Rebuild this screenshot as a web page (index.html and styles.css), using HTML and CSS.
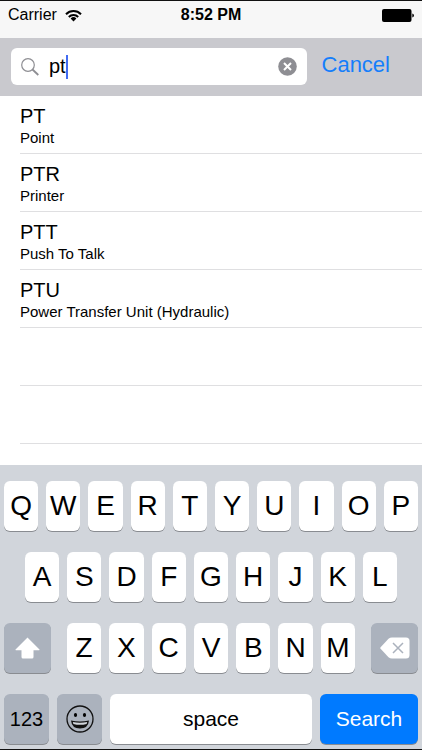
FILE: index.html
```html
<!DOCTYPE html>
<html lang="en">
<head>
<meta charset="utf-8">
<meta name="viewport" content="width=device-width, initial-scale=1">
<title>Abbreviations</title>
<link rel="stylesheet" href="styles.css">
</head>
<body>
<div class="phone">
  <header class="status">
    <div class="carrier">
      <span>Carrier</span>
      <svg class="wifi" viewBox="0 0 17 13" aria-hidden="true">
        <g fill="none" stroke="#000" stroke-width="2">
          <path d="M1 5.2a10.6 10.6 0 0 1 15 0"/>
          <path d="M3.800 8a6.700 6.700 0 0 1 9.400 0"/>
        </g>
        <path d="M8.500 12.400 5.600 9.500a4.100 4.100 0 0 1 5.800 0z"/>
      </svg>
    </div>
    <time class="clock">8:52 PM</time>
    <svg class="battery" viewBox="0 0 32 13" aria-hidden="true">
      <rect width="29.500" height="13" rx="2"/>
      <path d="M30.300 4.500q1.700.5 1.700 2t-1.700 2z"/>
    </svg>
  </header>

  <form class="search-bar">
    <div class="field">
      <svg class="lens" viewBox="0 0 18 18" fill="none" stroke="#8e8e93" aria-hidden="true">
        <circle cx="7" cy="7" r="6.300" stroke-width="1.200"/>
        <path d="m11.500 11.500 5.800 5.500" stroke-width="1.800"/>
      </svg>
      <input class="query" type="text" value="pt" size="2" aria-label="Search">
      <span class="caret"></span>
      <button class="clear" type="button" aria-label="Clear text">
        <svg viewBox="0 0 19 19" aria-hidden="true">
          <circle cx="9.500" cy="9.500" r="9.300" fill="#8e8e93"/>
          <path d="m6 6 7 7m0-7-7 7" stroke="#fff" stroke-width="2"/>
        </svg>
      </button>
    </div>
    <button class="cancel" type="button">Cancel</button>
  </form>

  <ul class="results">
    <li><span class="term">PT</span><span class="meaning">Point</span></li>
    <li><span class="term">PTR</span><span class="meaning">Printer</span></li>
    <li><span class="term">PTT</span><span class="meaning">Push To Talk</span></li>
    <li><span class="term">PTU</span><span class="meaning">Power Transfer Unit (Hydraulic)</span></li>
    <li></li>
    <li></li>
  </ul>

  <div class="keyboard">
    <div class="keys">
      <button class="key">Q</button><button class="key">W</button><button class="key">E</button><button class="key">R</button><button class="key">T</button><button class="key">Y</button><button class="key">U</button><button class="key">I</button><button class="key">O</button><button class="key">P</button>
    </div>
    <div class="keys keys-home">
      <button class="key">A</button><button class="key">S</button><button class="key">D</button><button class="key">F</button><button class="key">G</button><button class="key">H</button><button class="key">J</button><button class="key">K</button><button class="key">L</button>
    </div>
    <div class="keys keys-bottom">
      <button class="key dark" aria-label="Shift">
        <svg class="shift" viewBox="0 0 25 22" fill="#fff" aria-hidden="true">
          <path d="M12.500.5 24.500 12.500q.4.800-.5.800H18.500V20q0 1.500-1.500 1.500H8Q6.500 21.500 6.500 20V13.300H1q-.9 0-.5-.8z"/>
        </svg>
      </button>
      <div class="keys">
        <button class="key">Z</button><button class="key">X</button><button class="key">C</button><button class="key">V</button><button class="key">B</button><button class="key">N</button><button class="key">M</button>
      </div>
      <button class="key dark" aria-label="Delete">
        <svg class="delete" viewBox="0 0 30 22" aria-hidden="true">
          <path d="M.6 10.200 8.500 1.800Q10 .5 12 .5H26q3.500 0 3.500 3.500V18q0 3.500-3.500 3.500H12q-2 0-3.500-1.300L.6 11.800q-.7-.8 0-1.600z" fill="#fff"/>
          <path d="m13 6 10 10m0-10L13 16" stroke="#abb2bd" stroke-width="1.500"/>
        </svg>
      </button>
    </div>
    <div class="keys keys-actions">
      <button class="key dark numbers">123</button>
      <button class="key dark" aria-label="Emoji">
        <svg class="emoji" viewBox="0 0 28 28" aria-hidden="true">
          <circle cx="14" cy="14" r="13" fill="none" stroke="#111" stroke-width="1.300"/>
          <ellipse cx="9.500" cy="10" rx="1.600" ry="2"/>
          <ellipse cx="18.500" cy="10" rx="1.600" ry="2"/>
          <path d="M5 15.500q9 2 18 0-.8 8-9 8t-9-8z" fill="#111"/>
          <path d="M6.800 17q7.200 1.400 14.400 0l-.6 1.900q-6.600 1.800-13.200 0z" fill="#d1d5db"/>
        </svg>
      </button>
      <button class="key word">space</button>
      <button class="key word go">Search</button>
    </div>
  </div>
</div>
</body>
</html>
```
FILE: styles.css
```css
* {
  box-sizing: border-box;
}

body {
  margin: 0;
  background: #fff;
  color: #000;
  font-family: "Liberation Sans", Arial, sans-serif;
}

button,
input {
  margin: 0;
  padding: 0;
  border: 0;
  background: none;
  color: inherit;
  font: inherit;
}

svg {
  display: block;
}

.phone {
  display: flex;
  flex-direction: column;
  min-height: 100vh;
  border-top: 1px solid #111;
  border-bottom: 1px solid #111;
}

.status {
  display: grid;
  grid-template-columns: 1fr auto 1fr;
  align-items: center;
  padding: 5px 8px 14px;
  background: #f7f7f7;
  font-size: 16px;
  line-height: 18px;
}

.carrier {
  display: flex;
  align-items: center;
  gap: 8px;
}

.wifi {
  width: 17px;
  height: 13px;
}

.clock {
  font-weight: bold;
}

.battery {
  justify-self: end;
  width: 32px;
  height: 13px;
}

.search-bar {
  display: flex;
  align-items: center;
  padding: 10px 32px 11px 11px;
  background: #c9c9ce;
}

.field {
  display: flex;
  flex: 1;
  align-items: center;
  height: 37px;
  padding: 0 10px;
  border-radius: 6px;
  background: #fff;
}

.lens {
  width: 18px;
  height: 18px;
  margin-right: 10px;
}

.query {
  width: 17px;
  font-size: 20px;
  outline: none;
}

.caret {
  width: 2px;
  height: 24px;
  background: #426bf2;
}

.clear {
  width: 19px;
  height: 19px;
  margin-left: auto;
}

.cancel {
  margin-left: 14px;
  padding-bottom: 3px;
  color: #157efb;
  font-size: 22px;
  line-height: 24px;
}

.search-bar .field {
  margin-right: 1px;
}

.results {
  flex: 1;
  margin: 0;
  padding: 0 0 0 20px;
  list-style: none;
}

.results li {
  display: flex;
  flex-direction: column;
  height: 58px;
  padding-top: 8px;
  border-bottom: 1px solid #dfdfe1;
}

.term {
  font-size: 20px;
  line-height: 24px;
}

.meaning {
  font-size: 15px;
  line-height: 20px;
}

.keyboard {
  display: grid;
  gap: 21px;
  padding: 16px 4px 5px;
  background: #d1d5db;
}

.keys {
  display: grid;
  grid-auto-flow: column;
  grid-auto-columns: minmax(0, 1fr);
  gap: 8px;
}

.keys-home {
  padding: 0 21px;
}

.keys-bottom {
  grid-template-columns: 47px 1fr 47px;
  gap: 16px;
}

.keys-actions {
  grid-template-columns: 45px 45px 1fr 98px;
}

.key {
  display: flex;
  align-items: center;
  justify-content: center;
  height: 50px;
  border-radius: 6px;
  background: #fff;
  box-shadow: 0 1px 0 #898c91;
  font-size: 28px;
}

.word {
  font-size: 21px;
}

.numbers {
  font-size: 20px;
}

.dark {
  background: #abb2bd;
}

.go {
  background: #007aff;
  color: #fff;
}

.shift {
  width: 25px;
  height: 22px;
}

.delete {
  width: 30px;
  height: 22px;
}

.emoji {
  width: 28px;
  height: 28px;
}
```
